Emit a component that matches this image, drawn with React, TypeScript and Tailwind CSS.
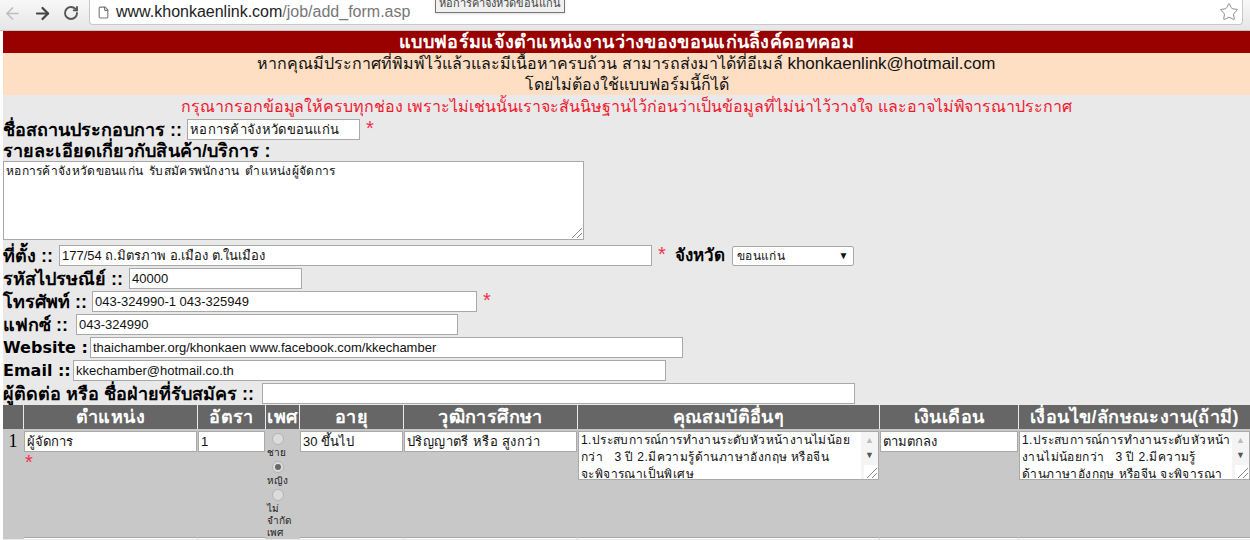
import { ArrowLeft, ArrowRight, RotateCw, File, Star } from 'lucide-react';

const thai = "font-['Tahoma','Liberation_Sans','Noto_Sans','Noto_Sans_CJK_SC',sans-serif]";

const inputClass =
  'block h-[21px] border border-[#a9a9a9] bg-white px-[2px] text-[13px] text-[#111] outline-none';

const labelClass = 'text-[18px] font-bold leading-[20px] text-black whitespace-nowrap';
const latinLabelClass = "font-['DejaVu_Sans',sans-serif] text-[16px] font-bold leading-[20px] text-black whitespace-nowrap";

function Req() {
  return <span className="text-[20px] leading-[20px] text-[#f0304a]">*</span>;
}

type FieldProps = {
  label: string;
  labelWidth: string;
  value: string;
  width: string;
  req?: boolean;
  latin?: boolean;
  extra?: string;
};

function Field({ label, labelWidth, value, width, req, latin, extra = '' }: FieldProps) {
  return (
    <div className="flex h-[23px] items-center gap-[4px]">
      <span className={`${latin ? latinLabelClass : labelClass} ${labelWidth}`}>{label}</span>
      <input readOnly value={value} className={`${inputClass} ${width} ${extra}`} />
      {req && <span className="ml-[2px]"><Req /></span>}
    </div>
  );
}

const columns = 'grid-cols-[20px_173px_67px_33px_103px_173px_301px_138px_1fr]';

const headers = ['', 'ตำแหน่ง', 'อัตรา', 'เพศ', 'อายุ', 'วุฒิการศึกษา', 'คุณสมบัติอื่นๆ', 'เงินเดือน', 'เงื่อนไข/ลักษณะงาน(ถ้ามี)'];

function Radio({ checked }: { checked?: boolean }) {
  return (
    <span className="mt-[2px] ml-[5px] flex size-[12px] items-center justify-center rounded-full border border-[#b4b4b4] bg-[#dcdcdc]">
      {checked && <span className="size-[6px] rounded-full bg-[#666]" />}
    </span>
  );
}

function ScrollNote({ lines }: { lines: string[] }) {
  return (
    <div className="relative h-[49px] overflow-hidden border border-[#a9a9a9] bg-white">
      <div className="pl-[2px] text-[12px] leading-[17px] tracking-[0.4px] whitespace-pre text-[#111]">
        {lines.map((line) => (
          <p key={line}>{line}</p>
        ))}
      </div>
      <div className="absolute top-0 right-0 flex h-full w-[17px] flex-col items-center bg-[#f4f4f4] pt-[4px]">
        <span className="text-[9px] leading-[9px] text-[#bbb]">▲</span>
        <span className="mt-[6px] text-[9px] leading-[9px] text-[#555]">▼</span>
      </div>
      <Grip />
    </div>
  );
}

function Grip() {
  return (
    <svg className="absolute right-0 bottom-0 bg-white" width="14" height="14" viewBox="0 0 14 14">
      <path d="M3 13 13 3M8 13l5-5" stroke="#888" strokeWidth="1" fill="none" />
    </svg>
  );
}

export default function App() {
  return (
    <div className={`h-[540px] w-[1250px] overflow-hidden bg-white ${thai}`}>
      {/* browser toolbar */}
      <div className="relative flex h-[31px] items-start border-b border-[#c4c4c4] bg-gradient-to-b from-[#f8f8f8] to-[#e6e6e6]">
        <div className="flex h-[26px] w-[89px] shrink-0 items-center gap-[11px] pl-[3px]">
          <ArrowLeft size={19} strokeWidth={2} className="text-[#bdbdbd]" />
          <ArrowRight size={19} strokeWidth={2.8} className="text-[#444]" />
          <RotateCw size={16} strokeWidth={2.8} className="text-[#555]" />
        </div>
        <div className="mr-[7px] flex h-[25px] flex-1 items-center rounded-b-sm border-x border-b border-[#c8c8c8] bg-white pl-[7px]">
          <File size={13} className="text-[#777]" />
          <span className="ml-[6px] font-['Liberation_Sans',sans-serif] text-[16px] text-[#222]">
            www.khonkaenlink.com<span className="text-[#777]">/job/add_form.asp</span>
          </span>
          <Star size={20} strokeWidth={1} className="mr-[3px] ml-auto text-[#777]" />
        </div>
        <div className="absolute top-[-6px] left-[435px] flex h-[19px] w-[130px] items-center justify-center border border-[#777] bg-[#f0f0f0] text-[11px] text-[#444] shadow">
          หอการค้าจังหวัดขอนแก่น
        </div>
      </div>

      <div className="flex h-[509px] bg-[#e9e9e9]">
        <div className="w-[3px] shrink-0 bg-white" />
        <div className="min-w-0 flex-1">
          <div className="h-[22px] bg-[#990000] text-center text-[18px] leading-[22px] tracking-[0.3px] font-bold text-white">
            แบบฟอร์มแจ้งตำแหน่งงานว่างของขอนแก่นลิ้งค์ดอทคอม
          </div>
          <div className="h-[42px] bg-[#ffdfc4] text-center text-[16px] leading-[21px] text-[#111]">
            <p>
              หากคุณมีประกาศที่พิมพ์ไว้แล้วและมีเนื้อหาครบถ้วน สามารถส่งมาได้ที่อีเมล์ <span className="text-[17px]">khonkaenlink@hotmail.com</span>
            </p>
            <p>โดยไม่ต้องใช้แบบฟอร์มนี้ก็ได้</p>
          </div>
          <p className="h-[23px] text-center text-[16px] leading-[23px] tracking-[-0.04px] text-[#f0182c]">
            กรุณากรอกข้อมูลให้ครบทุกช่อง เพราะไม่เช่นนั้นเราจะสันนิษฐานไว้ก่อนว่าเป็นข้อมูลที่ไม่น่าไว้วางใจ และอาจไม่พิจารณาประกาศ
          </p>

          <Field label="ชื่อสถานประกอบการ ::" labelWidth="w-[180px]" value="หอการค้าจังหวัดขอนแก่น" width="w-[173px]" extra="text-[12px] tracking-[0.3px]" req />
          <div className={`${labelClass} h-[19px] tracking-[0.1px]`}>รายละเอียดเกี่ยวกับสินค้า/บริการ :</div>
          <div className="relative mt-px h-[79px] w-[581px] border border-[#a9a9a9] bg-white px-[2px] text-[12px] leading-[18px] tracking-[0.3px] [word-spacing:2px] text-[#111]">
            หอการค้าจังหวัดขอนแก่น รับสมัครพนักงาน ตำแหน่งผู้จัดการ
            <Grip />
          </div>
          <div className="mt-[4px] flex h-[23px] items-center gap-[4px]">
            <span className={`${labelClass} w-[52px]`}>ที่ตั้ง ::</span>
            <input readOnly value="177/54 ถ.มิตรภาพ อ.เมือง ต.ในเมือง" className={`${inputClass} w-[593px]`} />
            <span className="ml-[2px]"><Req /></span>
            <span className="ml-[5px] text-[17px] leading-[20px] font-bold whitespace-nowrap text-black">จังหวัด</span>
            <div className="ml-[3px] flex h-[20px] w-[122px] items-center justify-between rounded-[2px] border border-[#a9a9a9] bg-white px-[4px] text-[12px] tracking-[0.4px] text-[#111]">
              ขอนแก่น
              <span className="text-[10px]">▼</span>
            </div>
          </div>
          <Field label="รหัสไปรษณีย์ ::" labelWidth="w-[122px]" value="40000" width="w-[173px]" />
          <Field label="โทรศัพท์ ::" labelWidth="w-[85px]" value="043-324990-1 043-325949" width="w-[385px]" req />
          <Field label="แฟกซ์ ::" labelWidth="w-[69px]" value="043-324990" width="w-[382px]" />
          <Field latin label="Website :" labelWidth="w-[83px]" value="thaichamber.org/khonkaen www.facebook.com/kkechamber" width="w-[593px]" />
          <Field latin label="Email ::" labelWidth="w-[66px]" value="kkechamber@hotmail.co.th" width="w-[593px]" />
          <Field label="ผู้ติดต่อ หรือ ชื่อฝ่ายที่รับสมัคร ::" labelWidth="w-[255px]" value="" width="w-[593px]" />

          {/* positions table */}
          <div className={`grid ${columns} gap-x-px`}>
            {headers.map((h, i) => (
              <div key={i} className="h-[24px] bg-[#666] text-center text-[18px] leading-[24px] tracking-[0.4px] font-bold whitespace-nowrap text-white">
                {h}
              </div>
            ))}
          </div>
          <div className="h-[110px] bg-[#c8c8c8]">
            <div className={`grid ${columns} h-[108px] items-start gap-x-px pt-[2px]`}>
              <div className="text-center font-['Liberation_Serif',serif] text-[18px] leading-[20px] text-black">1</div>
              <div>
                <input readOnly value="ผู้จัดการ" className={`${inputClass} w-full`} />
                <div className="pl-[1px] leading-[14px]"><Req /></div>
              </div>
              <input readOnly value="1" className={`${inputClass} w-full`} />
              <div className="pl-px text-[10px] leading-[12px] text-[#222]">
                <Radio />
                <p className="mt-[2px]">ชาย</p>
                <Radio checked />
                <p className="mt-[2px]">หญิง</p>
                <Radio />
                <p className="mt-[2px]">ไม่<br />จำกัด<br />เพศ</p>
              </div>
              <input readOnly value="30 ขึ้นไป" className={`${inputClass} w-full`} />
              <input readOnly value="ปริญญาตรี หรือ สูงกว่า" className={`${inputClass} w-full tracking-[0.4px]`} />
              <ScrollNote lines={['1.ประสบการณ์การทำงานระดับหัวหน้างานไม่น้อย', 'กว่า   3 ปี 2.มีความรู้ด้านภาษาอังกฤษ หรือจีน', 'จะพิจารณาเป็นพิเศษ']} />
              <input readOnly value="ตามตกลง" className={`${inputClass} w-full`} />
              <ScrollNote lines={['1.ประสบการณ์การทำงานระดับหัวหน้า', 'งานไม่น้อยกว่า   3 ปี 2.มีความรู้', 'ด้านภาษาอังกฤษ หรือจีน จะพิจารณา']} />
            </div>
            {/* top edge of the next row's inputs, cut off by the window */}
            <div className={`grid ${columns} h-[2px] gap-x-px`}>
              {headers.map((h, i) => (
                <div key={h} className={i === 0 || i === 3 ? '' : 'border-t border-[#a9a9a9] bg-white'} />
              ))}
            </div>
          </div>
        </div>
      </div>
    </div>
  );
}
